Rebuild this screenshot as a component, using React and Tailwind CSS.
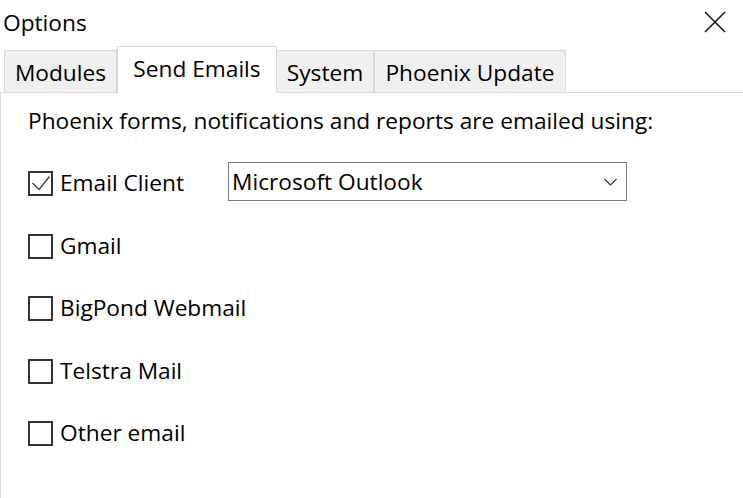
import React from "react";

const font = { fontFamily: '"Open Sans", "Noto Sans", sans-serif' };

function Check({ checked }) {
  return (
    <div className="w-[25px] h-[25px] border-2 border-[#333333] bg-white flex items-center justify-center shrink-0">
      {checked && (
        <svg width="21" height="21" viewBox="0 0 21 21">
          <path d="M2.5 10 L9 16.5 L19.5 3.5" fill="none" stroke="#444444" strokeWidth="1.4" />
        </svg>
      )}
    </div>
  );
}

function Row({ label, checked, children }) {
  return (
    <div className="h-[25px] flex items-center">
      <Check checked={checked} />
      <span className="ml-[7px] w-[168px] text-[22.7px] leading-none text-black whitespace-nowrap">{label}</span>
      {children}
    </div>
  );
}

export default function App() {
  return (
    <div className="w-[743px] h-[498px] bg-white relative overflow-hidden text-[22.7px] text-black" style={font}>
      <div className="h-[46px] flex items-start">
        <span className="ml-[3px] mt-[8px] leading-[30px]">Options</span>
        <div className="ml-auto mr-[16px] mt-[10px]">
          <svg width="24" height="24" viewBox="0 0 24 24">
            <path d="M2 2 L22 22 M22 2 L2 22" stroke="#111" strokeWidth="1.5" />
          </svg>
        </div>
      </div>
      <div className="flex items-end h-[47px] border-b border-[#d9d9d9] pl-[4px] leading-[30px] whitespace-nowrap">
        <div className="w-[113px] h-[42px] bg-[#f0f0f0] border border-b-0 border-[#d9d9d9] flex items-center justify-center pt-[3px]">Modules</div>
        <div className="w-[160px] h-[47px] -mb-px bg-white border border-b-0 border-[#d9d9d9] flex items-center justify-center pb-[2px]">Send Emails</div>
        <div className="w-[97px] h-[42px] bg-[#f0f0f0] border border-b-0 border-l-0 border-[#d9d9d9] flex items-center justify-center pt-[3px]">System</div>
        <div className="w-[192px] h-[42px] bg-[#f0f0f0] border border-b-0 border-[#d9d9d9] flex items-center justify-center pt-[3px]">Phoenix Update</div>
      </div>
      <div className="border-l border-[#d9d9d9] h-[405px] pl-[27px] pt-[13px]">
        <div className="leading-[30px] whitespace-nowrap">Phoenix forms, notifications and reports are emailed using:</div>
        <div className="mt-[35px] flex flex-col gap-[37.5px]">
          <Row label="Email Client" checked>
            <div className="mb-[4px] w-[399px] h-[39px] border border-[#7a7a7a] flex items-center pl-[3px] pr-[9px]">
              <span className="leading-[30px] flex-1">Microsoft Outlook</span>
              <svg width="13" height="8" viewBox="0 0 13 8">
                <path d="M0.5 1 L6.5 7 L12.5 1" fill="none" stroke="#333" strokeWidth="1.1" />
              </svg>
            </div>
          </Row>
          <Row label="Gmail" />
          <Row label="BigPond Webmail" />
          <Row label="Telstra Mail" />
          <Row label="Other email" />
        </div>
      </div>
    </div>
  );
}
